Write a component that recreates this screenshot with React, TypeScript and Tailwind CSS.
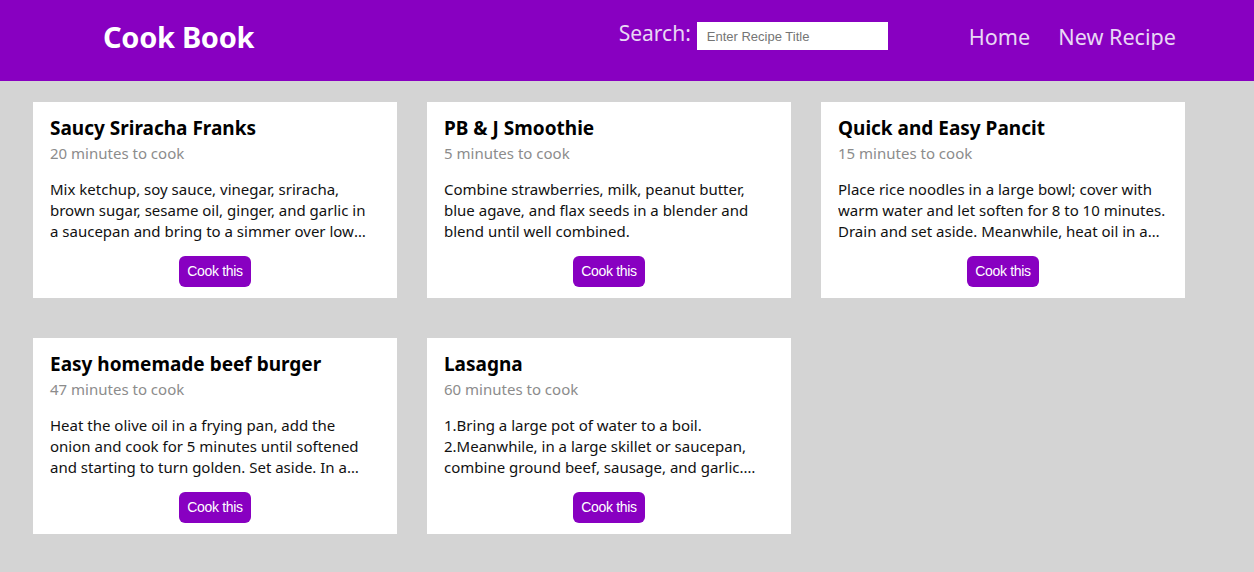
export default function App() {
  const recipes = [
    {
      title: 'Saucy Sriracha Franks',
      minutes: 20,
      description:
        'Mix ketchup, soy sauce, vinegar, sriracha, brown sugar, sesame oil, ginger, and garlic in\na saucepan and bring to a simmer over low heat, stirring occasionally.',
    },
    {
      title: 'PB & J Smoothie',
      minutes: 5,
      description:
        'Combine strawberries, milk, peanut butter, blue agave, and flax seeds in a blender and blend until well combined.',
    },
    {
      title: 'Quick and Easy Pancit',
      minutes: 15,
      description:
        'Place rice noodles in a large bowl; cover with warm water and let soften for 8 to 10 minutes. Drain and set aside. Meanwhile, heat oil in a wok or large skillet.',
    },
    {
      title: 'Easy homemade beef burger',
      minutes: 47,
      description:
        'Heat the olive oil in a frying pan, add the onion and cook for 5 minutes until softened and starting to turn golden. Set aside. In a bowl, mix the mince.',
    },
    {
      title: 'Lasagna',
      minutes: 60,
      description:
        '1.Bring a large pot of water to a boil. 2.Meanwhile, in a large skillet or saucepan, combine ground beef, sausage, and garlic. Cook over medium heat until brown.',
    },
  ];

  return (
    <div className="min-h-screen bg-[#d4d4d4] font-['Noto_Sans',sans-serif]">
      <header className="h-[81px] bg-[#8800c1] flex items-center pb-[7px]">
        <h1 className="ml-[103px] text-[29px] font-bold text-white tracking-[-0.3px]">Cook Book</h1>
        <div className="ml-auto flex items-center">
          <label className="text-[21px] text-[#e8d8f4] mr-[6px] -mt-[6px]">Search:</label>
          <input
            type="text"
            placeholder="Enter Recipe Title"
            className="w-[191px] h-[28px] bg-white px-[10px] text-[13px] text-black placeholder:text-[#757575] font-['Liberation_Sans',sans-serif] outline-none -mt-[2px]"
          />
        </div>
        <nav className="ml-[81px] mr-[78px] flex items-center gap-[28px] text-[21.6px] text-[#e8d8f4]">
          <a>Home</a>
          <a>New Recipe</a>
        </nav>
      </header>

      <main className="pt-[21px] pl-[33px] grid grid-cols-[364px_364px_364px] gap-x-[30px] gap-y-[40px]">
        {recipes.map((r) => (
          <div key={r.title} className="bg-white h-[196px] pl-[17px] pr-[19px] pt-[14px] pb-[11px] flex flex-col">
            <h2 className="text-[19px] font-bold text-black leading-[24px]">{r.title}</h2>
            <p className="text-[15px] text-[#8c8c8c] leading-[26px]">{r.minutes} minutes to cook</p>
            <p className="mt-[13px] text-[15px] text-[#111] leading-[21px] line-clamp-3 whitespace-pre-line">{r.description}</p>
            <div className="mt-auto flex justify-center">
              <button className="h-[31px] px-[8px] ml-[2px] rounded-[6px] bg-[#8800c1] text-white text-[14px] tracking-[-0.3px] font-['Liberation_Sans',sans-serif]">
                Cook this
              </button>
            </div>
          </div>
        ))}
      </main>
    </div>
  );
}
